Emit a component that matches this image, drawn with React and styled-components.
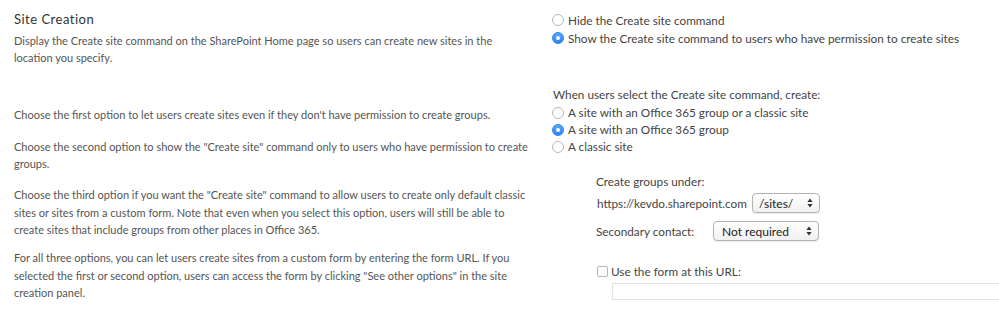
import React from "react";
import styled, { createGlobalStyle } from "styled-components";

const Global = createGlobalStyle`
  html, body { margin: 0; padding: 0; background: #fff; }
  body { font-family: Lato, "Open Sans", sans-serif; color: #444; }
`;

const Page = styled.div`
  display: grid;
  grid-template-columns: 538px 1fr;
  width: 999px;
  height: 310px;
  overflow: hidden;
  box-sizing: border-box;
  padding: 10px 0 0 14px;
`;

const LeftCol = styled.div`
  display: flex;
  flex-direction: column;
  width: 516px;
`;

const Title = styled.h2`
  margin: 0 0 4px;
  font-size: 13px;
  font-weight: 400;
  letter-spacing: 0.5px;
  color: #333;
  line-height: 18px;
`;

const Para = styled.p`
  margin: 0 0 ${(p) => p.$gap || 13}px;
  font-size: 11px;
  line-height: 17.3px;
  color: #555;
`;

const RightCol = styled.div`
  display: flex;
  flex-direction: column;
  padding-top: 1px;
  color: #444;
`;

const RadioList = styled.div`
  display: flex;
  flex-direction: column;
  margin-bottom: ${(p) => p.$mb || 0}px;
`;

const RadioRow = styled.label`
  display: flex;
  align-items: center;
  height: ${(p) => p.$h || 17}px;
  gap: 4px;
  font-size: 11.75px;
  color: #444;
`;

const RadioDot = styled.span`
  width: 12px;
  height: 12px;
  border-radius: 50%;
  box-sizing: border-box;
  flex: none;
  display: flex;
  align-items: center;
  justify-content: center;
  border: 1px solid ${(p) => (p.$on ? "#2f84ef" : "#b8b8b8")};
  background: ${(p) => (p.$on ? "linear-gradient(#5aa6fb, #2d84f0)" : "#fff")};
  &::after {
    content: "";
    display: ${(p) => (p.$on ? "block" : "none")};
    width: 4px;
    height: 4px;
    border-radius: 50%;
    background: #fff;
  }
`;

const Question = styled.div`
  font-size: 11.75px;
  color: #444;
  height: 18px;
  line-height: 18px;
  margin: 1px 0 0 1px;
`;

const Sub = styled.div`
  display: flex;
  flex-direction: column;
  margin-left: 44px;
`;

const SubLabel = styled.div`
  font-size: 11.75px;
  line-height: 18px;
  color: #444;
  margin-bottom: 1px;
`;

const FieldRow = styled.div`
  display: flex;
  align-items: center;
  height: 22px;
  margin-bottom: ${(p) => p.$mb || 0}px;
  font-size: 11.75px;
  color: #444;
`;

const FieldLabel = styled.span`
  width: ${(p) => (p.$w ? p.$w + "px" : "auto")};
  margin-left: ${(p) => p.$ml || 0}px;
  margin-right: 2px;
  flex: none;
`;

const Select = styled.div`
  box-sizing: border-box;
  width: ${(p) => p.$w}px;
  height: 20px;
  border: 1px solid #b3b3b3;
  border-radius: 4px;
  background: linear-gradient(#ffffff, #f1f1f1);
  box-shadow: 0 1px 1px rgba(0, 0, 0, 0.08);
  display: flex;
  align-items: center;
  justify-content: space-between;
  padding: 0 6px 0 ${(p) => p.$pl || 7}px;
  font-size: 12px;
  color: #222;
`;

const CheckRow = styled.label`
  display: flex;
  align-items: center;
  gap: 3px;
  height: 18px;
  margin: 20px 0 3px 1px;
  font-size: 11.75px;
  color: #444;
`;

const CheckBox = styled.span`
  width: 11px;
  height: 11px;
  box-sizing: border-box;
  border: 1px solid #b5b5b5;
  border-radius: 2px;
  background: #fff;
  flex: none;
`;

const UrlInput = styled.div`
  box-sizing: border-box;
  margin-left: 16px;
  height: 17px;
  border: 1px solid #e3e3e3;
  border-right: none;
  background: #fff;
`;

const Arrows = () => (
  <svg width="6" height="10" viewBox="0 0 6 10">
    <path d="M3 0.5 L5.6 4 H0.4 Z" fill="#333" />
    <path d="M3 9.5 L5.6 6 H0.4 Z" fill="#333" />
  </svg>
);

export default function App() {
  return (
    <>
      <Global />
      <Page>
        <LeftCol>
          <Title>Site Creation</Title>
          <Para $gap={39}>
            Display the Create site command on the SharePoint Home page so users can create new sites in the location you specify.
          </Para>
          <Para $gap={15}>
            Choose the first option to let users create sites even if they don't have permission to create groups.
          </Para>
          <Para $gap={14}>
            Choose the second option to show the "Create site" command only to users who have permission to create groups.
          </Para>
          <Para $gap={11}>
            Choose the third option if you want the "Create site" command to allow users to create only default classic sites or sites from a custom form. Note that even when you select this option, users will still be able to create sites that include groups from other places in Office 365.
          </Para>
          <Para>
            For all three options, you can let users create sites from a custom form by entering the form URL. If you selected the first or second option, users can access the form by clicking "See other options" in the site creation panel.
          </Para>
        </LeftCol>
        <RightCol>
          <RadioList $mb={38}>
            <RadioRow $h={18}>
              <RadioDot />
              Hide the Create site command
            </RadioRow>
            <RadioRow $h={18}>
              <RadioDot $on />
              Show the Create site command to users who have permission to create sites
            </RadioRow>
          </RadioList>
          <Question>When users select the Create site command, create:</Question>
          <RadioList $mb={18}>
            <RadioRow>
              <RadioDot />
              A site with an Office 365 group or a classic site
            </RadioRow>
            <RadioRow>
              <RadioDot $on />
              A site with an Office 365 group
            </RadioRow>
            <RadioRow>
              <RadioDot />
              A classic site
            </RadioRow>
          </RadioList>
          <Sub>
            <SubLabel>Create groups under:</SubLabel>
            <FieldRow $mb={6}>
              <FieldLabel $ml={1} $w={153}>https://kevdo.sharepoint.com</FieldLabel>
              <Select $w={68} $pl={6}>
                /sites/
                <Arrows />
              </Select>
            </FieldRow>
            <FieldRow>
              <FieldLabel $w={115}>Secondary contact:</FieldLabel>
              <Select $w={106} $pl={8}>
                Not required
                <Arrows />
              </Select>
            </FieldRow>
            <CheckRow>
              <CheckBox />
              Use the form at this URL:
            </CheckRow>
            <UrlInput />
          </Sub>
        </RightCol>
      </Page>
    </>
  );
}
